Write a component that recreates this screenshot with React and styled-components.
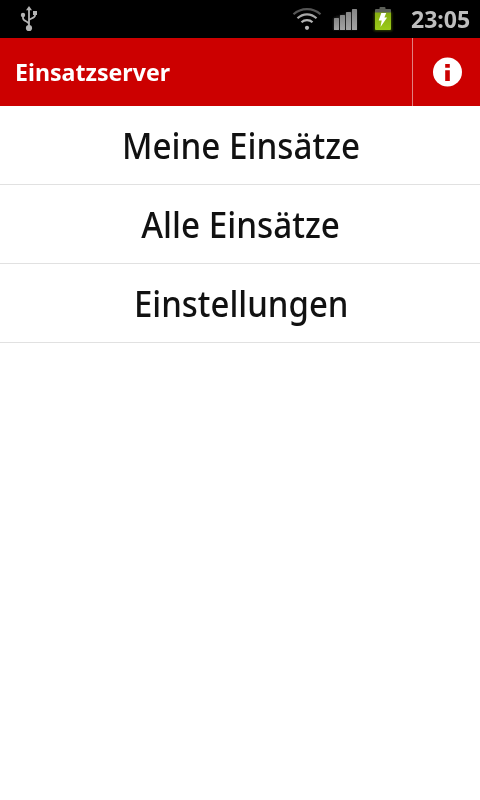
import React from 'react';
import styled, { createGlobalStyle } from 'styled-components';

const GlobalStyle = createGlobalStyle`
  * { box-sizing: border-box; }
  body { margin: 0; background: #fff; font-family: "Noto Sans", "Open Sans", sans-serif; }
`;

const Screen = styled.div`
  display: flex;
  flex-direction: column;
  width: 480px;
  height: 800px;
  background: #fff;
  overflow: hidden;
`;

const StatusBar = styled.div`
  display: flex;
  align-items: center;
  justify-content: space-between;
  height: 38px;
  padding: 0 10px 0 18px;
  background: #000;
`;

const StatusIcons = styled.div`
  display: flex;
  align-items: center;
  svg { display: block; flex: none; }
`;

const Clock = styled.time`
  width: 59px;
  margin-left: 12px;
  font-size: 24px;
  line-height: 38px;
  font-weight: 700;
  white-space: nowrap;
  color: #bebebe;
  transform: scaleX(${(p) => p.$stretch});
  transform-origin: left center;
`;

const ActionBar = styled.header`
  display: flex;
  height: 68px;
  background: #cc0000;
`;

const Title = styled.h1`
  flex: 1;
  margin: 0;
  padding-left: 15px;
  font-size: 24px;
  line-height: 68px;
  font-weight: 700;
  color: #fff;
  transform: scaleX(${(p) => p.$stretch});
  transform-origin: 15px center;
`;

const InfoButton = styled.button`
  display: flex;
  align-items: center;
  justify-content: center;
  width: 68px;
  padding: 0 0 0 2px;
  border: 0;
  border-left: 1px solid #e08080;
  background: none;
`;

const Menu = styled.nav`
  display: flex;
  flex-direction: column;
`;

const MenuItem = styled.a`
  display: flex;
  justify-content: center;
  height: 79px;
  padding-left: 2px;
  border-bottom: 1px solid #e1e1e1;
  color: #111;
  font-size: 36px;
  line-height: 80px;
  font-weight: 500;
`;

const Label = styled.span`
  white-space: nowrap;
  transform: scaleX(${(p) => p.$stretch});
`;

const UsbIcon = () => (
  <svg width="22" height="38" viewBox="18 0 22 38" fill="none" stroke="#b4b4b4" strokeWidth="1.8">
    <path d="M29 28V9M29 24.5C29 21 23 21.5 23 18V15M29 20C30 18.5 35 18 35 15.500V13" />
    <path d="M29 6l3 4.200h-6z" fill="#b4b4b4" stroke="none" />
    <circle cx="29" cy="28" r="3.100" fill="#b4b4b4" stroke="none" />
    <circle cx="23" cy="15" r="2.200" fill="#b4b4b4" stroke="none" />
    <path d="M33 11h4v4h-4z" fill="#b4b4b4" stroke="none" />
  </svg>
);

const WifiIcon = () => (
  <svg width="38" height="38" viewBox="290 0 38 38" fill="none" strokeWidth="2.200">
    <path d="M293.500 14.300C301 7.300 313 7.300 320.500 14.300" stroke="#555" />
    <path d="M297.500 18.300C303 13 311 13 316.500 18.300" stroke="#a8a8a8" />
    <path d="M301.500 22.300C304.500 19.500 309.500 19.500 312.500 22.300" stroke="#b4b4b4" />
    <circle cx="307" cy="27.800" r="2.100" fill="#b8b8b8" />
  </svg>
);

const SignalIcon = () => (
  <svg width="38" height="38" viewBox="328 0 38 38">
    <defs>
      <linearGradient id="bars" x1="0" y1="0" x2="0" y2="1">
        <stop offset="0" stopColor="#858585" />
        <stop offset="1" stopColor="#a4a4a4" />
      </linearGradient>
      <filter id="barGlow" x="-20%" y="-20%" width="140%" height="140%">
        <feGaussianBlur stdDeviation="1.300" />
      </filter>
    </defs>
    <path d="M333 18l24-8v20h-24z" fill="#222" filter="url(#barGlow)" />
    <g fill="url(#bars)">
      <rect x="334" y="18" width="5" height="12" rx=".5" />
      <rect x="340" y="15" width="5" height="15" rx=".5" />
      <rect x="346" y="12" width="5" height="18" rx=".5" />
      <rect x="352" y="9" width="5" height="21" rx=".5" />
    </g>
  </svg>
);

const BatteryIcon = () => (
  <svg width="33" height="38" viewBox="366 0 33 38">
    <defs>
      <linearGradient id="charge" x1="0" y1="0" x2="0" y2="1">
        <stop offset="0" stopColor="#86ad12" />
        <stop offset="1" stopColor="#9acb18" />
      </linearGradient>
      <filter id="chargeGlow" x="-30%" y="-30%" width="160%" height="160%">
        <feGaussianBlur stdDeviation="1.200" />
      </filter>
    </defs>
    <rect x="374" y="12" width="18" height="19" fill="#304200" filter="url(#chargeGlow)" />
    <path d="M379.500 9v-1q0-1 1-1h4q1 0 1 1v1h4.500q1 0 1 1v3h-16v-3q0-1 1-1z" fill="#5c5f58" />
    <path d="M375 12.500h16V29q0 1-1 1h-14q-1 0-1-1z" fill="url(#charge)" />
    <path d="M381.300 13h4.900l-1.800 4.500h2.700l-6.600 9.500 1.200-6.400h-3z" fill="#fff" />
  </svg>
);

const InfoIcon = () => (
  <svg width="29" height="30" viewBox="0 0 29 30">
    <circle cx="14.500" cy="15" r="14.500" fill="#fff" />
    <path d="M12.200 7h4.600v3.700h-4.600zM12.200 13.300h4.600v10.700h-4.600z" fill="#cc0000" />
  </svg>
);

const items = [
  { label: 'Meine Einsätze', stretch: 0.923 },
  { label: 'Alle Einsätze', stretch: 0.924 },
  { label: 'Einstellungen', stretch: 0.915 },
];

export default function App() {
  return (
    <Screen>
      <GlobalStyle />
      <StatusBar>
        <StatusIcons>
          <UsbIcon />
        </StatusIcons>
        <StatusIcons>
          <WifiIcon />
          <SignalIcon />
          <BatteryIcon />
          <Clock $stretch={0.96}>23:05</Clock>
        </StatusIcons>
      </StatusBar>
      <ActionBar>
        <Title $stretch={0.965}>Einsatzserver</Title>
        <InfoButton aria-label="Info">
          <InfoIcon />
        </InfoButton>
      </ActionBar>
      <Menu>
        {items.map((item) => (
          <MenuItem key={item.label}>
            <Label $stretch={item.stretch}>{item.label}</Label>
          </MenuItem>
        ))}
      </Menu>
    </Screen>
  );
}
